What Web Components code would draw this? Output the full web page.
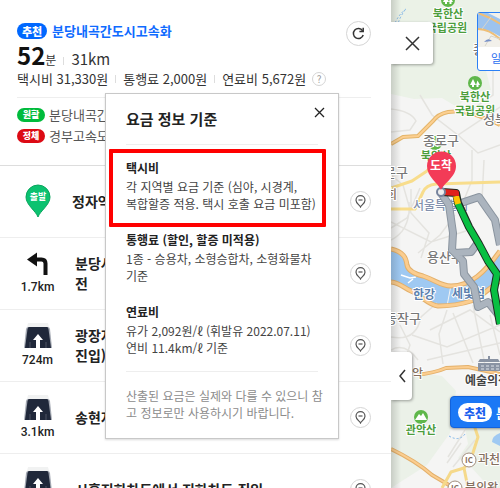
<!DOCTYPE html>
<html lang="ko">
<head>
<meta charset="utf-8">
<title>길찾기</title>
<style>
    body {
        margin: 0;
        font-family: "Noto Sans CJK KR", "Noto Sans", sans-serif;
        color: #333;
    }
</style>
</head>
<body>
<route-app></route-app>

<script>
class RouteBadge extends HTMLElement {
    connectedCallback() {
        this.attachShadow({ mode: "open" }).innerHTML = `
        <style>
            :host {
                display: inline-flex;
                align-items: center;
                justify-content: center;
                box-sizing: border-box;
                width: 28px;
                height: 14px;
                border-radius: 8px;
                background: var(--badge, #00bb3c);
                color: #fff;
                font-size: 9px;
                line-height: 14px;
                font-weight: 900;
            }
            :host([large]) {
                width: 30px;
                height: 16px;
                font-size: 11px;
                line-height: 16px;
            }
        </style>
        <slot></slot>`;
    }
}

class RoundButton extends HTMLElement {
    connectedCallback() {
        this.attachShadow({ mode: "open" }).innerHTML = `
        <style>
            :host {
                display: inline-flex;
            }
            button {
                display: flex;
                align-items: center;
                justify-content: center;
                box-sizing: border-box;
                width: var(--size, 21px);
                height: var(--size, 21px);
                padding: 0;
                border: 1px solid #d5d5d5;
                border-radius: 50%;
                background: #fff;
                color: inherit;
                font: inherit;
            }
        </style>
        <button aria-label="${this.getAttribute("label")}"><slot></slot></button>`;
    }
}

class RouteSummary extends HTMLElement {
    connectedCallback() {
        this.attachShadow({ mode: "open" }).innerHTML = `
        <style>
            :host {
                display: block;
                box-sizing: border-box;
                height: 165px;
                padding: 21px 20px 0 17px;
                font-size: 13px;
                line-height: 20px;
                white-space: nowrap;
            }
            header, .name, .time, .fees, .roads li {
                display: flex;
                align-items: center;
            }
            header {
                align-items: flex-start;
                justify-content: space-between;
            }
            .name {
                gap: 5px;
                color: #0f6bff;
                font-weight: 700;
            }
            .time {
                height: 28px;
                align-items: baseline;
                line-height: 28px;
            }
            .time strong {
                color: #111;
                font-size: 24px;
            }
            .time small {
                font-size: 12px;
            }
            .time span {
                font-size: 15px;
            }
            i {
                width: 1px;
                height: 8px;
                margin: 0 7px;
                background: #ddd;
            }
            .fees round-button {
                --size: 14px;
                margin-left: 6px;
                color: #999;
                font-size: 10px;
                line-height: 12px;
            }
            .roads {
                margin: 8px 0 0;
                padding: 6px 0 0;
                border-top: 1px solid #eee;
                list-style: none;
            }
            .roads li {
                gap: 4px;
                height: 21px;
                color: #555;
            }
            .refresh {
                --size: 25px;
            }
        </style>
        <header>
            <div>
                <div class="name"><route-badge large style="--badge: #0068ff">추천</route-badge>분당내곡간도시고속화</div>
                <div class="time"><strong>52</strong><small>분</small><i></i><span>31km</span></div>
            </div>
            <round-button class="refresh" label="새로고침">
                <svg width="13" height="13" viewBox="0 0 13 13" fill="none" stroke="#333" stroke-width="1.500">
                    <path d="M10.600 3.800A5 5 0 1 0 11.200 8"/><path d="M11.200 .8v3.700H7.400"/>
                </svg>
            </round-button>
        </header>
        <div class="fees">
            택시비 31,330원<i></i>통행료 2,000원<i></i>연료비 5,672원
            <round-button label="요금 정보 기준">?</round-button>
        </div>
        <ul class="roads">
            <li><route-badge>원활</route-badge>분당내곡간</li>
            <li><route-badge style="--badge: #dc0a14">정체</route-badge>경부고속도</li>
        </ul>`;
    }
}

const stepIcons = {
    start: `<svg width="26" height="34" viewBox="0 0 26 34">
        <path d="M13 33C11 27 1 21 1 13a12 12 0 0 1 24 0c0 8-10 14-12 20z" fill="#0cc270" stroke="#08a55d"/>
        <text x="13" y="16" text-anchor="middle" font-size="9" font-weight="700" fill="#fff">출발</text>
    </svg>`,
    left: `<svg width="24" height="24" viewBox="0 0 24 24">
        <path d="M7 7.500h8.500q4 0 4 4V23" fill="none" stroke="#111" stroke-width="4"/>
        <path d="M1 7.500 11 .5v14z" fill="#111"/>
    </svg>`,
    under: `<svg width="28" height="26" viewBox="0 0 28 26">
        <path d="M4 0h20l1 4H3z" fill="#f1f2f2"/>
        <path d="M4 4h20q1.500 0 2 2l2 19H0L2 6q.5-2 2-2z" fill="#a3a8b2"/>
        <path d="M5 4h18q1 0 1.500 2L27 25H1L3.500 6Q4 4 5 4z" fill="#20283a"/>
        <path d="M6 19v6M22 19v6" stroke="#4c5363"/>
        <path d="m14 11 5 6h-3v8h-4v-8H9z" fill="#fff"/>
    </svg>`
};

class GuideStep extends HTMLElement {
    connectedCallback() {
        const icon = this.getAttribute("icon");
        const distance = this.getAttribute("distance") || "";
        this.attachShadow({ mode: "open" }).innerHTML = `
        <style>
            :host {
                display: flex;
                align-items: center;
                box-sizing: border-box;
                height: 72px;
                padding: 0 20px 1px 16px;
                border-top: 1px solid #eee;
                font-size: 14px;
                line-height: 20px;
                font-weight: 700;
                color: #222;
            }
            .sign {
                display: flex;
                flex-direction: column;
                align-items: center;
                gap: 3px;
                width: 43px;
                margin-right: 16px;
                font: 500 12px/16px Roboto, sans-serif;
            }
            .sign span {
                height: 16px;
            }
            .sign text {
                font-family: "Noto Sans CJK KR", sans-serif;
            }
            :host([icon="start"]) .sign {
                margin-right: 13px;
            }
            :host([icon="start"]) .sign span {
                display: none;
            }
            .text {
                flex: 1;
            }
        </style>
        <div class="sign">${stepIcons[icon]}<span>${distance}</span></div>
        <div class="text"><slot></slot></div>
        <round-button label="위치 보기">
            <svg width="11" height="13" viewBox="0 0 11 13" fill="none" stroke="#555" stroke-width="1.200">
                <path d="M5.500 12C4.500 10 1 8.500 1 5.200a4.500 4.500 0 0 1 9 0C10 8.500 6.500 10 5.500 12z"/><path d="M3.500 5h4"/>
            </svg>
        </round-button>`;
    }
}

class FeePopup extends HTMLElement {
    connectedCallback() {
        this.attachShadow({ mode: "open" }).innerHTML = `
        <style>
            :host {
                display: block;
                box-sizing: border-box;
                width: 234px;
                padding: 0 20px 17px;
                border: 1px solid #c8c8c8;
                background: #fff;
                box-shadow: 0 1px 2px rgba(0, 0, 0, .15);
                font-size: 12px;
                line-height: 17px;
                white-space: nowrap;
            }
            header {
                display: flex;
                justify-content: space-between;
                align-items: flex-start;
                height: 50px;
                border-bottom: 1px solid #eee;
            }
            h2 {
                margin: 0;
                color: #222;
                font-size: 15px;
                line-height: 50px;
                font-weight: 700;
            }
            button {
                display: flex;
                margin: 13px -7px 0 0;
                padding: 0;
                border: 0;
                background: none;
            }
            dl {
                display: flex;
                flex-direction: column;
                gap: 19px;
                margin: 0;
                padding: 14px 0 15px;
                border-bottom: 1px solid #eee;
            }
            dt {
                margin-bottom: 2px;
                color: #222;
                font-weight: 700;
            }
            dd {
                margin: 0;
                color: #444;
            }
            p {
                margin: 15px 0 0;
                color: #8c8c8c;
            }
        </style>
        <header>
            <h2>요금 정보 기준</h2>
            <button aria-label="닫기">
                <svg width="11" height="11" viewBox="0 0 11 11" stroke="#222" stroke-width="1.300"><path d="m1 1 9 9M10 1l-9 9"/></svg>
            </button>
        </header>
        <dl>
            <div><dt>택시비</dt><dd>각 지역별 요금 기준 (심야, 시경계,<br>복합할증 적용. 택시 호출 요금 미포함)</dd></div>
            <div><dt>통행료 (할인, 할증 미적용)</dt><dd>1종 - 승용차, 소형승합차, 소형화물차<br>기준</dd></div>
            <div><dt>연료비</dt><dd>유가 2,092원/ℓ (휘발유 2022.07.11)<br>연비 11.4km/ℓ 기준</dd></div>
        </dl>
        <p>산출된 요금은 실제와 다를 수 있으니 참<br>고 정보로만 사용하시기 바랍니다.</p>`;
    }
}

class RoadMap extends HTMLElement {
    connectedCallback() {
        this.attachShadow({ mode: "open" }).innerHTML = `
        <style>
            :host {
                display: block;
                position: relative;
                overflow: hidden;
                background: #f5f5f4;
            }
            .canvas {
                position: absolute;
                inset: 0;
                width: 100%;
                height: 100%;
                font-size: 12px;
                font-weight: 500;
            }
            .canvas text {
                paint-order: stroke;
                stroke: #fff;
                stroke-width: 2px;
                stroke-linejoin: round;
                fill: #777;
            }
            .canvas .park { fill: #4c9d3c; font-size: 11px; font-weight: 700; }
            .canvas .gu { fill: #777; font-size: 13px; }
            .canvas .city { fill: #8391ad; }
            .canvas .river { fill: #5b7fae; font-weight: 700; }
            .canvas .spot { fill: #444; font-weight: 700; }
            .canvas .brown { fill: #85705f; }
            .canvas .goal { fill: #fff; stroke: none; font-weight: 700; }
            .canvas .ic { fill: #85705f; stroke: none; font-size: 8px; font-weight: 700; }
            button, .layer, .pick {
                position: absolute;
                box-sizing: border-box;
            }
            button {
                display: flex;
                align-items: center;
                justify-content: center;
                left: 0;
                padding: 0;
                border: 0;
                background: #fff;
                box-shadow: 1px 1px 3px rgba(0, 0, 0, .35);
            }
            .close {
                top: 22px;
                width: 42px;
                height: 42px;
                border-radius: 0 3px 3px 0;
            }
            .fold {
                top: 352px;
                width: 21px;
                height: 48px;
                border-radius: 0 4px 4px 0;
            }
            .layer {
                left: 86px;
                top: 12px;
                width: 60px;
                height: 59px;
                overflow: hidden;
                border: 1px solid #2b80f5;
                border-radius: 3px;
                background: #fff;
                color: #2b70f0;
                font-size: 11px;
                line-height: 22px;
                white-space: nowrap;
            }
            .layer svg {
                display: block;
            }
            .layer span {
                padding-left: 13px;
            }
            .pick {
                display: flex;
                align-items: center;
                gap: 4px;
                left: 59px;
                top: 396px;
                height: 32px;
                padding: 0 7px;
                border: 1px solid #1262dc;
                border-radius: 4px;
                background: #1b78f5;
                box-shadow: 0 1px 3px rgba(0, 0, 0, .4);
                color: #fff;
                font-size: 13px;
                font-weight: 700;
                white-space: nowrap;
            }
            .pick b {
                padding: 0 6px;
                border-radius: 10px;
                background: #fff;
                color: #1b60ee;
                font-size: 12px;
                line-height: 19px;
            }
        </style>
        <svg class="canvas">
            <defs>
                <linearGradient id="edge"><stop stop-color="#000" stop-opacity=".15"/><stop offset="1" stop-color="#000" stop-opacity="0"/></linearGradient>
                <g id="tree">
                    <circle r="7" fill="#5fb74a"/>
                    <path d="m-2-4 3 6h-2v2h-2v-2h-2z M2.500-2.500 5 2H3.500v2h-2V2H1z" fill="#fff"/>
                </g>
                <path id="upper-bank" d="M391 249c12 3 15 8 16 16 1 6 8 9 16 11 12 4 18 10 28 10 20 0 34-14 49-35"/>
                <path id="lower-bank" d="M391 282c9 1 13 6 20 9 10 4 17 14 27 15 11 0 21-1 33-5 12-5 18-13 29-20"/>
                <path id="north-road" d="M391 144l12-7 15-1 15-15q5-7 15-9 20-3 52 13"/>
                <path id="south-roads" d="M415 375q20-2 31-7l22-1 32 7M391 449q25 12 41 26l22 13"/>
                <path id="detour" d="M441 193l8 12 4 28-1 17 11 11 1 13 10 13 4 20 10-5 12 15M458 204l21-7 9 13 7 10 5 25M454 253l17-1 6-8"/>
            </defs>
            <g transform="translate(-391)">
                <path d="M391 0h109v22l-15 45 6 23-20 3-14 14-15-9-28 1-23-5z" fill="#ebf2e7"/>
                <path d="M391 377l25-5 26 4 14 15-6 42-23 32-36 23z M490 488l-18-20-14-10 10-14-3-16h35v60z" fill="#ebf1e8"/>
                <path d="M391 249c12 3 15 8 16 16 1 6 8 9 16 11 12 4 18 10 28 10 20 0 34-14 49-35v30c-11 7-17 15-29 20-12 4-22 5-33 5-10-1-17-11-27-15-7-3-11-8-20-9z" fill="#9fc9f2"/>
                <path d="M451 285l-4 21" stroke="#f5f5f4"/>
                <path d="M401 275l9 3 6-1M408 283l5-4" stroke="#fff" stroke-width="1.500" fill="none"/>
                <path d="M500 433q-8 3-8 9l8 4z" fill="#9fc9f2"/>
                <g fill="none" stroke="#e4e3df" stroke-width="1.500">
                    <path d="M391 109q20 2 25 12l-6 9-19 2M420 95l12 20 26 20 42-28M493 55v40l-25 17M458 135l20 18 22-8M391 175l12 10 8 28 18 20-8 25M420 188l-13 30-16 10M455 215l-15 20-22 18M411 209v-20M391 222l40 20 35-11M391 240q20-10 18-38"/>
                    <path d="M472 150v30l-8 20M484 160l-2 40M447 310l-8 24 4 30M430 330l40-20 30 22M453 313l20 50M473 305l12 60M490 315l10 40M400 325l10 20-6 18M412 335l35 12 53-22M391 337q25 5 30-20l16-14M427 360l73-17M391 350q14-8 27 10M461 443l-14 20M465 430l-17 27M475 440l-22 27"/>
                </g>
                <g fill="none" stroke-linejoin="round">
                    <use href="#north-road" stroke="#e3b56a" stroke-width="4"/>
                    <use href="#north-road" stroke="#fccf90" stroke-width="2"/>
                    <path d="M391 188l21-7 15-10q5-8 14-10M391 209h24l8-17q3-7 13-8l64-2" stroke="#f8dd8c" stroke-width="3"/>
                    <g stroke="#e3b06b" stroke-width="5"><use href="#upper-bank"/><use href="#lower-bank"/></g>
                    <g stroke="#fbcd8f" stroke-width="3"><use href="#upper-bank"/><use href="#lower-bank"/></g>
                    <use href="#south-roads" stroke="#e3b06b" stroke-width="4"/>
                    <use href="#south-roads" stroke="#fbcd8f" stroke-width="2"/>
                    <path d="M474 425l4 12-7 22-7 9-13 4-9 16M464 468l4 20" stroke="#f5d98a" stroke-width="3"/>
                    <path d="M391 34q5-18 15-25M396 30q3-12 9-20M449 436q10 6 16-2" stroke="#7db3e8" stroke-dasharray="2 2"/>
                </g>
                <path d="M391 0h10v488h-10z" fill="url(#edge)"/>
                <use href="#tree" x="448" y="0"/><use href="#tree" x="475" y="83"/><use href="#tree" x="435" y="143"/>
                <circle cx="421" cy="417" r="7" fill="#5fb74a"/><path d="m415 420 4-6 2 2 2-3 4 7z" fill="#fff"/>
                <g text-anchor="middle">
                    <text class="park" x="448" y="18">북한산</text><text class="park" x="447" y="32">국립공원</text>
                    <text class="park" x="475" y="101">북한산</text><text class="park" x="475" y="115">국립공원</text>
                    <text class="park" x="436" y="160">북악산</text><text class="park" x="421" y="434">관악산</text>
                </g>
                <text class="gu" x="473" y="54">종</text>
                <text class="gu" x="483" y="124">성북</text>
                <text class="gu" x="423" y="145">종로구</text>
                <text class="gu" x="408" y="177" text-anchor="end">문구</text>
                <text class="brown" x="397" y="199" text-anchor="end">회</text>
                <text class="city" x="413" y="210">서울특별시</text>
                <text class="gu" x="427" y="262">용산구</text>
                <text class="river" x="413" y="299">한강</text>
                <text class="river" x="452" y="298">세빛섬</text>
                <text class="gu" x="421" y="323" text-anchor="end">동작구</text>
                <text class="brown" x="423" y="378" text-anchor="end">관악</text>
                <g fill="#8a93a3"><path d="M478 362l2-3h18l2 3z"/><path d="M478 363h22v8h-22z"/><path d="M488 356h2v4h-2z"/></g>
                <path d="M481 366h19M481 369h19" stroke="#dfe3e9" stroke-dasharray="3 2"/>
                <text class="spot" x="465" y="385">예술의전당</text>
                <circle cx="469" cy="460" r="7" fill="#fff" stroke="#a08c7c"/><text class="ic" x="469" y="463" text-anchor="middle">IC</text>
                <text class="brown" x="478" y="464">과천</text>
                <circle cx="455" cy="488" r="7" fill="#fff" stroke="#a08c7c"/><text class="ic" x="455" y="491" text-anchor="middle">IC</text>
                <text class="brown" x="465" y="492">북의왕</text>
                <g fill="none" stroke-linejoin="round">
                    <use href="#detour" stroke="#8a949f" stroke-width="8"/>
                    <use href="#detour" stroke="#abb4be" stroke-width="6"/>
                    <path d="M442 192l14 1 2 10 11 24 10 17 9 17 9 13-3 16 6 34" stroke="#1d2a20" stroke-width="8"/>
                    <path d="M457 202l12 25 10 17 9 17 9 13-3 16 6 34" stroke="#08bf42" stroke-width="6"/>
                    <path d="M456 196l2 8" stroke="#ffc400" stroke-width="6"/>
                    <path d="M443 192l13 1v3" stroke="#e0221c" stroke-width="6"/>
                </g>
                <circle cx="441" cy="192" r="4" fill="#eee" stroke="#75839d" stroke-width="2"/>
                <path d="M441 190c-3-7-14-13-14-24a14.500 14.500 0 0 1 29 0c0 11-12 17-15 24z" fill="#f33b57"/>
                <text class="goal" x="441" y="170" text-anchor="middle">도착</text>
            </g>
        </svg>
        <button class="close" aria-label="닫기">
            <svg width="15" height="15" viewBox="0 0 15 15" stroke="#333" stroke-width="1.500"><path d="m1 1 13 13M14 1 1 14"/></svg>
        </button>
        <button class="fold" aria-label="접기">
            <svg width="8" height="14" viewBox="0 0 8 14" fill="none" stroke="#333" stroke-width="1.500"><path d="M7 1 2 7l5 6"/></svg>
        </button>
        <div class="layer">
            <svg width="60" height="34" viewBox="0 0 60 34">
                <path d="M0 0h60v34H0z" fill="#f2f0ea"/>
                <path d="M0 0h10l14 7v18Q12 16 0 16z" fill="#9dc3ee"/>
                <path d="M0 0l12 5 14 8M0 16q12 0 24 12" fill="none" stroke="#efbe76" stroke-width="2"/>
                <path d="M4 16l9-12M7 33l6-10 9 3" stroke="#d8d4ca" fill="none"/>
                <path d="M6 29q4-5 8-1z" fill="#7891c8"/>
            </svg>
            <span>일반</span>
        </div>
        <div class="pick"><b>추천</b>분당</div>`;
    }
}

class RouteApp extends HTMLElement {
    connectedCallback() {
        this.attachShadow({ mode: "open" }).innerHTML = `
        <style>
            :host {
                display: flex;
                height: 100vh;
                overflow: hidden;
            }
            .panel {
                position: relative;
                flex: 0 0 391px;
                background: #fff;
            }
            .panel guide-step:first-of-type {
                border-top-color: #ddd;
            }
            road-map {
                flex: 1;
            }
            fee-popup {
                position: absolute;
                left: 105px;
                top: 93px;
            }
            .mark {
                position: absolute;
                left: 109px;
                top: 149px;
                box-sizing: border-box;
                width: 217px;
                height: 78px;
                border: 4px solid #f00;
                border-radius: 1px;
            }
        </style>
        <section class="panel">
            <route-summary></route-summary>
            <guide-step icon="start">정자역</guide-step>
            <guide-step icon="left" distance="1.7km">분당사<br>전</guide-step>
            <guide-step icon="under" distance="724m">광장지<br>진입)</guide-step>
            <guide-step icon="under" distance="3.1km">송현지</guide-step>
            <guide-step icon="under">시흥지하차도에서 지하차도 진입</guide-step>
            <fee-popup></fee-popup>
            <div class="mark"></div>
        </section>
        <road-map></road-map>`;
    }
}

customElements.define("route-badge", RouteBadge);
customElements.define("round-button", RoundButton);
customElements.define("route-summary", RouteSummary);
customElements.define("guide-step", GuideStep);
customElements.define("fee-popup", FeePopup);
customElements.define("road-map", RoadMap);
customElements.define("route-app", RouteApp);
</script>
</body>
</html>
